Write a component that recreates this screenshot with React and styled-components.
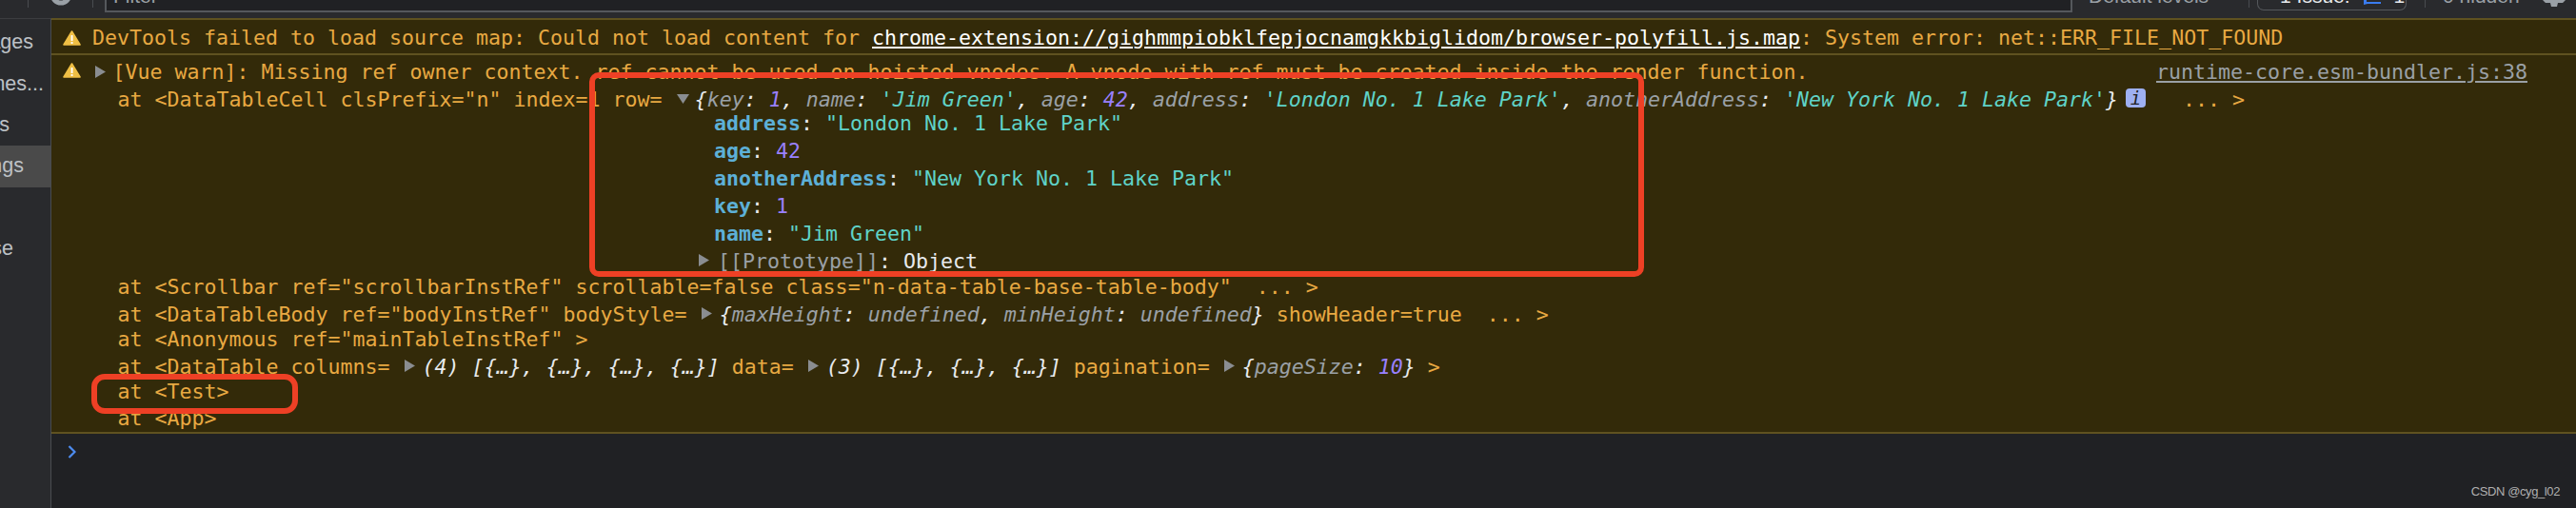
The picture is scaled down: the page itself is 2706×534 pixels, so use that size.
import React from "react";
import styled, { createGlobalStyle } from "styled-components";

const Global = createGlobalStyle`
  html, body { margin: 0; padding: 0; background: #202124; }
  #root { width: 2706px; height: 534px; overflow: hidden; }
`;

const mono = `"DejaVu Sans Mono", "Liberation Mono", monospace`;
const sans = `"Liberation Sans", Arial, sans-serif`;

const Page = styled.div`
  position: relative;
  width: 2706px;
  height: 534px;
  overflow: hidden;
  display: flex;
  flex-direction: column;
  background: #202124;
`;

const Toolbar = styled.div`
  flex: 0 0 19px;
  height: 19px;
  overflow: hidden;
  display: flex;
  align-items: flex-start;
  background: #292a2d;
  font-family: ${sans};
  font-size: 21px;
  color: #9aa0a6;
`;
const ToolSep = styled.div`
  flex: 0 0 1px;
  height: 8px;
  margin-left: ${(p) => p.$ml}px;
  background: #494c50;
`;
const ClearIcon = styled.svg`
  flex: 0 0 24px;
  width: 24px;
  height: 6px;
  margin-left: ${(p) => p.$ml}px;
`;
const FilterBox = styled.div`
  flex: 0 0 2067px;
  width: 2067px;
  height: 13px;
  margin-left: 12px;
  box-sizing: border-box;
  border-left: 2px solid #55585c;
  border-right: 2px solid #55585c;
  border-bottom: 2px solid #55585c;
  background: #202124;
  padding-left: 7px;
  overflow: hidden;
`;
const ClippedLabel = styled.div`
  flex: 0 0 auto;
  height: 3px;
  margin-left: ${(p) => p.$ml}px;
  display: flex;
  align-items: flex-end;
  white-space: nowrap;
  line-height: 24px;
  color: ${(p) => p.$color || "#9aa0a6"};
`;
const LabelText = styled.span`
  display: block;
  margin-bottom: -5px;
`;
const IssuePill = styled.div`
  flex: 0 0 157px;
  width: 157px;
  height: 11px;
  margin-left: 8px;
  box-sizing: border-box;
  border: 1px solid #55585c;
  border-top: none;
  border-radius: 0 0 7px 7px;
  display: flex;
  align-items: flex-start;
  padding-left: 23px;
  overflow: hidden;
`;
const PillIcon = styled.svg`
  flex: 0 0 18px;
  width: 18px;
  height: 5px;
  margin-left: 14px;
`;
const GearIcon = styled.svg`
  flex: 0 0 24px;
  width: 24px;
  height: 7px;
  margin-left: 24px;
`;

const Body = styled.div`
  flex: 1;
  display: flex;
  min-height: 0;
`;
const Sidebar = styled.nav`
  flex: 0 0 54px;
  width: 54px;
  box-sizing: border-box;
  padding-top: 3px;
  border-right: 1px solid #494c50;
  border-top: 1px solid #3c3d40;
  background: #292a2d;
  overflow: hidden;
  font-family: ${sans};
  font-size: 21.5px;
  color: #bdc1c6;
`;
const SideItem = styled.div`
  width: 53px;
  height: 43.4px;
  display: flex;
  align-items: center;
  justify-content: flex-end;
  overflow: hidden;
  white-space: nowrap;
  background: ${(p) => (p.$active ? "#4a4a4a" : "transparent")};
`;
const SideLabel = styled.span`
  flex: 0 0 auto;
  margin-right: ${(p) => p.$pr}px;
`;

const Main = styled.main`
  flex: 1;
  min-width: 0;
  display: flex;
  flex-direction: column;
  font-family: ${mono};
  font-size: 21.6px;
  color: #e8a942;
`;
const Message = styled.section`
  display: flex;
  background: #332a09;
  border-top: 2px solid #5f5220;
`;
const Gutter = styled.div`
  flex: 0 0 ${(p) => p.$w}px;
  width: ${(p) => p.$w}px;
  padding-left: 12px;
  box-sizing: border-box;
`;
const WarnIcon = styled.svg`
  display: block;
  width: 19px;
  height: 16px;
  margin-top: ${(p) => p.$mt}px;
`;
const FirstRow = styled.div`
  height: 34px;
  padding-top: 1px;
  line-height: 35px;
  white-space: nowrap;
`;
const LogBody = styled.div`
  flex: 1;
  min-width: 0;
  padding-top: 4px;
`;
const Line = styled.div`
  position: relative;
  display: flex;
  justify-content: space-between;
  height: ${(p) => p.$h || 27.6}px;
  line-height: ${(p) => p.$h || 27.6}px;
  white-space: pre;
  padding-left: ${(p) => p.$pl || 0}px;
`;
const LineLeft = styled.div`
  white-space: pre;
`;
const Trace = styled.div`
  margin-top: ${(p) => p.$mt || 0}px;
  padding-left: 57.6px;
`;
const ObjectBlock = styled.div`
  margin-top: -3px;
  padding-left: 684px;
`;
const Link = styled.span`
  color: #fff;
  text-decoration: underline;
`;
const Source = styled.span`
  color: #9aa0a6;
  text-decoration: underline;
  margin-right: 51px;
`;
const Dim = styled.span`
  color: #9aa0a6;
  font-style: ${(p) => (p.$plain ? "normal" : "italic")};
`;
const Str = styled.span`
  color: #5fd3c8;
  font-style: ${(p) => (p.$plain ? "normal" : "italic")};
`;
const Num = styled.span`
  color: #9980ff;
  font-style: ${(p) => (p.$plain ? "normal" : "italic")};
`;
const Punct = styled.span`
  color: #e8eaed;
  font-style: ${(p) => (p.$italic ? "italic" : "normal")};
`;
const Prop = styled.span`
  color: #5db0d7;
  font-weight: bold;
`;
const CaretSlot = styled.span`
  display: inline-block;
  width: 34px;
  position: relative;
  height: 1em;
  vertical-align: baseline;
`;
const CaretIcon = styled.svg`
  position: absolute;
  left: 15px;
  top: ${(p) => (p.$open ? 9 : 7)}px;
  width: ${(p) => (p.$open ? 13 : 11)}px;
  height: ${(p) => (p.$open ? 10 : 13)}px;
`;
const InfoBadge = styled.span`
  display: inline-block;
  width: 21px;
  height: 20px;
  margin: 0 0 0 8px;
  border-radius: 4px;
  background: #9eb0f2;
  color: #202124;
  font-style: italic;
  font-size: 19px;
  line-height: 20px;
  text-align: center;
  vertical-align: 2px;
`;
const LineCaret = styled.svg`
  position: absolute;
  left: ${(p) => p.$x}px;
  top: 7px;
  width: 11px;
  height: 13px;
`;

const Prompt = styled.div`
  flex: 1;
  background: #202124;
  border-top: 2px solid #5f5220;
  padding: 12px 0 0 17px;
`;
const PromptIcon = styled.svg`
  display: block;
  width: 9px;
  height: 14px;
`;

const Annotation = styled.div`
  position: absolute;
  left: ${(p) => p.$x}px;
  top: ${(p) => p.$y}px;
  width: ${(p) => p.$w}px;
  height: ${(p) => p.$h}px;
  box-sizing: border-box;
  border: 6px solid #ee4025;
  border-radius: ${(p) => p.$r}px;
  pointer-events: none;
`;
const Watermark = styled.div`
  position: absolute;
  right: 17px;
  bottom: 9px;
  font-family: ${sans};
  font-size: 13px;
  letter-spacing: -0.4px;
  line-height: 16px;
  color: #b0b0b0;
  white-space: nowrap;
`;

const Warn = ({ mt }) => (
  <WarnIcon $mt={mt} viewBox="0 0 19 16">
    <path d="M9.5 1 L18 15 H1 Z" fill="#efbf45" stroke="#efbf45" strokeWidth="1.6" strokeLinejoin="round" />
    <rect x="8.6" y="5" width="1.9" height="6" fill="#fff" />
    <rect x="8.6" y="12" width="1.9" height="2" fill="#fff" />
  </WarnIcon>
);
const Caret = ({ open }) => (
  <CaretSlot>
    {open ? (
      <CaretIcon $open viewBox="0 0 13 10">
        <path d="M0 0 H13 L6.5 10 Z" fill="#8a8d91" />
      </CaretIcon>
    ) : (
      <CaretIcon viewBox="0 0 11 13">
        <path d="M0 0 L11 6.5 L0 13 Z" fill="#8a8d91" />
      </CaretIcon>
    )}
  </CaretSlot>
);
const SideCaret = ({ x }) => (
  <LineCaret $x={x} viewBox="0 0 11 13">
    <path d="M0 0 L11 6.5 L0 13 Z" fill="#8a8d91" />
  </LineCaret>
);

export default function App() {
  return (
    <Page>
      <Global />
      <Toolbar>
        <ToolSep $ml={29} />
        <ClearIcon $ml={22} viewBox="0 0 24 6">
          <circle cx="12" cy="-6" r="9" fill="none" stroke="#9aa0a6" strokeWidth="5" />
        </ClearIcon>
        <ToolSep $ml={21} />
        <FilterBox>
          <ClippedLabel $ml={0}>
            <LabelText>Filter</LabelText>
          </ClippedLabel>
        </FilterBox>
        <ClippedLabel $ml={17}>
          <LabelText>Default levels</LabelText>
        </ClippedLabel>
        <ToolSep $ml={42} />
        <IssuePill>
          <ClippedLabel $ml={0} $color="#e8eaed">
            <LabelText>1 Issue:</LabelText>
          </ClippedLabel>
          <PillIcon viewBox="0 0 18 5">
            <path d="M0 0 H3 V2 H18 V4 H4 L0 5 Z" fill="#3a7cf0" />
          </PillIcon>
          <ClippedLabel $ml={14} $color="#e8eaed">
            <LabelText>1</LabelText>
          </ClippedLabel>
        </IssuePill>
        <ToolSep $ml={19} />
        <ClippedLabel $ml={18}>
          <LabelText>0 hidden</LabelText>
        </ClippedLabel>
        <GearIcon viewBox="0 0 24 7">
          <path d="M0 0 H24 L21 3 H16 L15 7 H9 L8 3 H3 Z" fill="#9aa0a6" />
        </GearIcon>
      </Toolbar>
      <Body>
        <Sidebar>
          <SideItem><SideLabel $pr={18}>3 messages</SideLabel></SideItem>
          <SideItem><SideLabel $pr={7}>3 user mes...</SideLabel></SideItem>
          <SideItem><SideLabel $pr={43}>No errors</SideLabel></SideItem>
          <SideItem $active><SideLabel $pr={28}>3 warnings</SideLabel></SideItem>
          <SideItem><SideLabel $pr={60}>No info</SideLabel></SideItem>
          <SideItem><SideLabel $pr={39}>No verbose</SideLabel></SideItem>
        </Sidebar>
        <Main>
          <Message>
            <Gutter $w={43}>
              <Warn mt={11} />
            </Gutter>
            <FirstRow>
              DevTools failed to load source map: Could not load content for{" "}
              <Link>chrome-extension://gighmmpiobklfepjocnamgkkbiglidom/browser-polyfill.js.map</Link>
              : System error: net::ERR_FILE_NOT_FOUND
            </FirstRow>
          </Message>
          <Message>
            <Gutter $w={12}>
              <Warn mt={8} />
            </Gutter>
            <LogBody>
              <Line $h={28} $pl={52.4}>
                <SideCaret x={34} />
                <LineLeft>[Vue warn]: Missing ref owner context. ref cannot be used on hoisted vnodes. A vnode with ref must be created inside the render function.</LineLeft>
                <Source>runtime-core.esm-bundler.js:38</Source>
              </Line>
              <Trace>
                <Line $h={28}>
                  <LineLeft>
                    at &lt;DataTableCell clsPrefix="n" index=1 row=
                    <Caret open />
                    <Punct $italic>{"{"}</Punct>
                    <Dim>key</Dim><Punct $italic>: </Punct><Num>1</Num><Punct $italic>, </Punct>
                    <Dim>name</Dim><Punct $italic>: </Punct><Str>'Jim Green'</Str><Punct $italic>, </Punct>
                    <Dim>age</Dim><Punct $italic>: </Punct><Num>42</Num><Punct $italic>, </Punct>
                    <Dim>address</Dim><Punct $italic>: </Punct><Str>'London No. 1 Lake Park'</Str><Punct $italic>, </Punct>
                    <Dim>anotherAddress</Dim><Punct $italic>: </Punct><Str>'New York No. 1 Lake Park'</Str>
                    <Punct $italic>{"}"}</Punct>
                    <InfoBadge>i</InfoBadge>
                    {"   ... >"}
                  </LineLeft>
                </Line>
              </Trace>
              <ObjectBlock>
                <Line $h={29}><LineLeft><Prop>address</Prop><Punct>: </Punct><Str $plain>"London No. 1 Lake Park"</Str></LineLeft></Line>
                <Line $h={29}><LineLeft><Prop>age</Prop><Punct>: </Punct><Num $plain>42</Num></LineLeft></Line>
                <Line $h={29}><LineLeft><Prop>anotherAddress</Prop><Punct>: </Punct><Str $plain>"New York No. 1 Lake Park"</Str></LineLeft></Line>
                <Line $h={29}><LineLeft><Prop>key</Prop><Punct>: </Punct><Num $plain>1</Num></LineLeft></Line>
                <Line $h={29}><LineLeft><Prop>name</Prop><Punct>: </Punct><Str $plain>"Jim Green"</Str></LineLeft></Line>
                <Line $h={29} $pl={4}>
                  <SideCaret x={-16} />
                  <LineLeft><Dim $plain>[[Prototype]]</Dim><Punct>: Object</Punct></LineLeft>
                </Line>
              </ObjectBlock>
              <Trace $mt={-1}>
                <Line><LineLeft>at &lt;Scrollbar ref="scrollbarInstRef" scrollable=false class="n-data-table-base-table-body"  ... &gt;</LineLeft></Line>
                <Line>
                  <LineLeft>
                    at &lt;DataTableBody ref="bodyInstRef" bodyStyle=
                    <Caret />
                    <Punct $italic>{"{"}</Punct>
                    <Dim>maxHeight</Dim><Punct $italic>: </Punct><Dim>undefined</Dim><Punct $italic>, </Punct>
                    <Dim>minHeight</Dim><Punct $italic>: </Punct><Dim>undefined</Dim>
                    <Punct $italic>{"}"}</Punct>
                    {" showHeader=true  ... >"}
                  </LineLeft>
                </Line>
                <Line><LineLeft>at &lt;Anonymous ref="mainTableInstRef" &gt;</LineLeft></Line>
                <Line>
                  <LineLeft>
                    at &lt;DataTable columns=
                    <Caret />
                    <Punct $italic>(4) [{"{…}, {…}, {…}, {…}"}]</Punct>
                    {" data="}
                    <Caret />
                    <Punct $italic>(3) [{"{…}, {…}, {…}"}]</Punct>
                    {" pagination="}
                    <Caret />
                    <Punct $italic>{"{"}</Punct>
                    <Dim>pageSize</Dim><Punct $italic>: </Punct><Num>10</Num>
                    <Punct $italic>{"}"}</Punct>
                    {" >"}
                  </LineLeft>
                </Line>
                <Line><LineLeft>at &lt;Test&gt;</LineLeft></Line>
                <Line><LineLeft>at &lt;App&gt;</LineLeft></Line>
              </Trace>
            </LogBody>
          </Message>
          <Prompt>
            <PromptIcon viewBox="0 0 9 14">
              <path d="M1.5 1 L7.5 7 L1.5 13" fill="none" stroke="#4d8cf0" strokeWidth="2.2" />
            </PromptIcon>
          </Prompt>
        </Main>
      </Body>
      <Annotation $x={619} $y={76} $w={1108} $h={215} $r={10} />
      <Annotation $x={96} $y={393} $w={217} $h={42} $r={14} />
      <Watermark>CSDN @cyg_l02</Watermark>
    </Page>
  );
}
